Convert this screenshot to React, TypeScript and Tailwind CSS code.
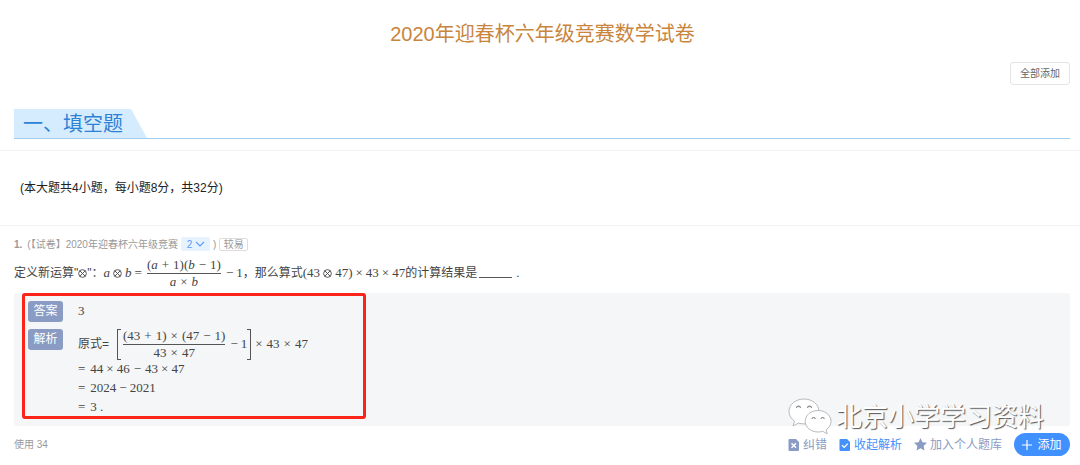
import type { ReactNode } from "react";

const MATH = "font-['Liberation_Serif','Noto_Sans_CJK_SC',serif] text-[13px] text-[#444] whitespace-nowrap";

function Op({ wide = false, children }: { wide?: boolean; children: ReactNode }) {
  return <span className={wide ? "mx-[4px]" : "mx-[3px]"}>{children}</span>;
}

function Otimes() {
  return (
    <svg
      viewBox="0 0 10 10"
      className="inline-block size-[9px] align-[-1px]"
      fill="none"
      stroke="currentColor"
      strokeWidth="1"
      role="img"
      aria-label="⊗"
    >
      <circle cx="5" cy="5" r="4.3" />
      <path d="M2 2l6 6M8 2l-6 6" />
    </svg>
  );
}

function Fraction({ top, bottom }: { top: ReactNode; bottom: ReactNode }) {
  return (
    <span className="mx-[2px] inline-flex flex-col items-center text-center">
      <span className="border-b border-[#555] leading-[16px]">{top}</span>
      <span className="leading-[16px]">{bottom}</span>
    </span>
  );
}

function Tag({ children }: { children: ReactNode }) {
  return (
    <dt className="flex h-[21px] w-[35px] shrink-0 items-center justify-center rounded-[3px] bg-[#8a9cc3] pb-px text-[12px] text-white">
      {children}
    </dt>
  );
}

function Watermark() {
  return (
    <div className="pointer-events-none absolute right-[26px] bottom-[20px] flex items-center gap-[4px]">
      <svg viewBox="0 0 44 38" className="h-[38px] w-[44px]" fill="#fff" stroke="#a8a8a8" strokeWidth="0.8">
        <path d="M16 1C7.500 1 1 6.500 1 13.500c0 4 2.200 7.400 5.600 9.700L5 28l5.400-2.900c1.700.5 3.600.8 5.600.8 8.400 0 15-5.500 15-12.400S24.400 1 16 1Z" />
        <path d="M30 12.500c-7.200 0-12.800 4.800-12.800 10.700S22.800 34 30 34c1.700 0 3.200-.2 4.700-.7l4.600 2.500-1.300-4c3-2 5-5 5-8.600 0-5.900-5.700-10.700-13-10.700Z" />
        <path d="M8.500 10c.4-2.400 3.600-2.400 4 0M19.500 10c.4-2.400 3.600-2.400 4 0M24 21c.3-2 3-2 3.300 0M33 21c.3-2 3-2 3.300 0" fill="none" stroke="#888" strokeWidth="1.200" />
      </svg>
      <span className="text-[26px] leading-[38px] whitespace-nowrap text-white [text-shadow:1px_1px_1px_#555]">
        北京小学学习资料
      </span>
    </div>
  );
}

export default function App() {
  return (
    <main className="bg-white pb-[9px] font-['Liberation_Sans','Noto_Sans_CJK_SC',sans-serif] text-[12px] text-[#444]">
      <h1 className="pt-[18px] pl-[5px] text-center text-[20px] leading-[32px] text-[#c9853d]">2020年迎春杯六年级竞赛数学试卷</h1>

      <div className="flex justify-end px-[10px] pt-[12px]">
        <button type="button" className="h-[23px] w-[60px] rounded-[3px] border border-[#e4e4e4] text-[10px] text-[#666]">
          全部添加
        </button>
      </div>

      <div className="pt-[24px] pr-[10px] pb-[11px] pl-[14px]">
        <div className="border-b border-[#a3cdec]">
          <h2 className="h-[29px] w-[133px] bg-[#d5ecff] pl-[9px] text-[20px] leading-[30px] text-[#2e82d4] [clip-path:polygon(0_0,88%_0,100%_100%,0_100%)]">
            一、填空题
          </h2>
        </div>
      </div>

      <p className="border-y border-[#f2f2f2] py-[28px] pl-[20px] text-[12px] leading-[18px] text-[#222]">
        (本大题共4小题，每小题8分，共32分)
      </p>

      <section className="pt-[10px] pr-[10px] pl-[14px]">
        <div className="flex h-[16px] items-center text-[10px] text-[#999]">
          <span className="font-bold">1.</span>
          <span className="ml-[5px]">(【试卷】2020年迎春杯六年级竞赛</span>
          <button type="button" className="mx-[3px] flex h-[14px] w-[29px] items-center justify-center gap-[3px] rounded-[2px] bg-[#e6f3ff] pl-px text-[#5a9cf8]">
            2
            <svg viewBox="0 0 10 6" className="h-[6px] w-[10px]" fill="none" stroke="currentColor" strokeWidth="1.100">
              <path d="M1 1l4 4 4-4" />
            </svg>
          </button>
          <span className="mr-[3px]">)</span>
          <span className="flex h-[13px] w-[29px] items-center justify-center rounded-[2px] border border-[#ddd]">较易</span>
        </div>

        <div className="flex h-[41px] items-center whitespace-nowrap">
          <span>定义新运算"<Otimes />"：</span>
          <span className={MATH}>
            <i>a</i><Op><Otimes /></Op><i>b</i><Op>=</Op>
          </span>
          <span className={MATH}>
            <Fraction
              top={<>(<i>a</i><Op wide>+</Op>1)(<i>b</i><Op wide>−</Op>1)</>}
              bottom={<><i>a</i><Op wide>×</Op><i>b</i></>}
            />
          </span>
          <span className={MATH}><Op>−</Op>1</span>
          <span>，那么算式</span>
          <span className={MATH}>
            (43<Op><Otimes /></Op>47)<Op>×</Op>43<Op>×</Op>47
          </span>
          <span>的计算结果是</span>
          <span className="ml-[2px] h-[10px] w-[33px] border-b border-[#555]" />
          <span className="ml-[4px]">.</span>
        </div>

        <div className="rounded-[2px] bg-[#f4f6f8] pb-[7px] pl-[8px]">
          <dl className="h-[126px] w-[344px] rounded-[3px] border-[3px] border-[#fb2418] pt-[5px] pl-[3px]">
            <div className="flex">
              <Tag>答案</Tag>
              <dd className={`ml-[15px] leading-[20px] ${MATH}`}>3</dd>
            </div>
            <div className="mt-[7px] flex">
              <Tag>解析</Tag>
              <dd className={`ml-[15px] ${MATH}`}>
                <div className="flex h-[30px] items-center">
                  <span className="font-['Liberation_Sans','Noto_Sans_CJK_SC',sans-serif] text-[12px]">原式=</span>
                  <span className="ml-[8px] h-[31px] w-[4px] border-y border-l border-[#555]" />
                  <Fraction
                    top={<>(43<Op wide>+</Op>1)<Op wide>×</Op>(47<Op wide>−</Op>1)</>}
                    bottom={<>43<Op wide>×</Op>47</>}
                  />
                  <span><Op>−</Op>1</span>
                  <span className="h-[31px] w-[4px] border-y border-r border-[#555]" />
                  <span><Op wide>×</Op>43<Op wide>×</Op>47</span>
                </div>
                <div className="leading-[19px]">=<span className="ml-[5px]">44</span><Op>×</Op>46<Op wide>−</Op>43<Op>×</Op>47</div>
                <div className="leading-[19px]">=<span className="ml-[5px]">2024</span><Op>−</Op>2021</div>
                <div className="leading-[19px]">=<span className="ml-[5px]">3 .</span></div>
              </dd>
            </div>
          </dl>
        </div>

        <footer className="relative flex items-center pt-[7px]">
          <span className="text-[10px] text-[#999]">使用 34</span>
          <div className="ml-auto flex h-[23px] items-center gap-[12px] text-[12px] text-[#8a9cc3]">
            <button type="button" className="flex items-center gap-[3px]">
              <svg viewBox="0 0 12 12" className="size-[12px]">
                <path d="M1.500 0H8l3 3v8a1 1 0 0 1-1 1H1.500a1 1 0 0 1-1-1V1a1 1 0 0 1 1-1Z" fill="currentColor" />
                <path d="M3.500 4.200l4.500 4.500M8 4.200L3.500 8.700" stroke="#fff" strokeWidth="1.500" />
              </svg>
              纠错
            </button>
            <button type="button" className="flex items-center gap-[3px] text-[#4590fb]">
              <svg viewBox="0 0 12 12" className="size-[12px]">
                <path d="M1.500 0H8l3 3v8a1 1 0 0 1-1 1H1.500a1 1 0 0 1-1-1V1a1 1 0 0 1 1-1Z" fill="currentColor" />
                <path d="M3 6.200l2.200 2.200 3.600-3.800" fill="none" stroke="#fff" strokeWidth="1.300" />
              </svg>
              收起解析
            </button>
            <button type="button" className="flex items-center gap-[3px]">
              <svg viewBox="0 0 12 12" className="size-[13px]" fill="currentColor">
                <path d="M6 0l1.800 3.900 4.200.5-3.100 2.900.8 4.200L6 9.400l-3.700 2.100.8-4.200L0 4.400l4.200-.5Z" />
              </svg>
              加入个人题库
            </button>
            <button type="button" className="flex h-[23px] w-[56px] items-center justify-center gap-[5px] rounded-full bg-[#4090ff] text-white">
              <svg viewBox="0 0 10 10" className="size-[10px]" stroke="currentColor" strokeWidth="1.200">
                <path d="M5 0v10M0 5h10" />
              </svg>
              添加
            </button>
          </div>
          <Watermark />
        </footer>
      </section>
    </main>
  );
}
